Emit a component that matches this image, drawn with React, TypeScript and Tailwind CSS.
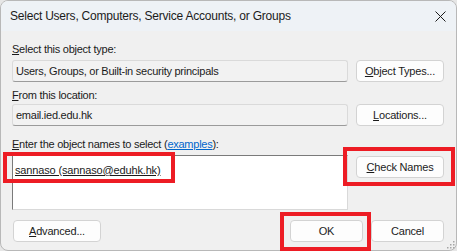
import React from 'react';

const Btn: React.FC<{ className?: string; children: React.ReactNode }> = ({ className = '', children }) => (
    <div className={`flex items-center justify-center h-[22px] bg-[#fdfdfd] border border-[#d3d3d3] rounded-[4px] text-[11px] tracking-[-0.2px] text-[#1b1b1b] shrink-0 ${className}`}>
        {children}
    </div>
);

const ReadField: React.FC<{ children: React.ReactNode }> = ({ children }) => (
    <div className="flex-1 h-[22px] flex items-center pl-[3px] bg-[#f2f2f2] border border-[#dadada] border-b-[#9b9b9b] rounded-[3px] text-[11px] tracking-[-0.25px] text-[#1b1b1b]">
        {children}
    </div>
);

export default function App() {
    return (
        <div className="relative w-[457px] h-[251px] bg-[#e6e6e6] font-['Liberation_Sans',Arial,sans-serif] overflow-hidden">
            <div className="w-[457px] h-[251px] flex flex-col bg-[#f0f0f0] border border-[#b8b8b8] rounded-[8px] overflow-hidden">
                {/* Title bar */}
                <div className="h-[30px] shrink-0 flex items-center pl-[9px] bg-[#eef2f6]">
                    <span className="text-[12px] tracking-[-0.22px] text-[#1b1b1b]">
                        Select Users, Computers, Service Accounts, or Groups
                    </span>
                    <svg className="ml-auto mr-[10px]" width="11" height="11" viewBox="0 0 11 11">
                        <path d="M0.5 0.5 L10.5 10.5 M10.5 0.5 L0.5 10.5" stroke="#1b1b1b" strokeWidth="1" fill="none" />
                    </svg>
                </div>

                {/* Body */}
                <div className="flex-1 flex flex-col pl-[11px] pr-[12px] pt-[10px]">
                    <div className="h-[16px] leading-[16px] text-[11px] tracking-[-0.25px] text-[#1b1b1b]">
                        <u>S</u>elect this object type:
                    </div>
                    <div className="mt-[3px] flex gap-[8px]">
                        <ReadField>Users, Groups, or Built-in security principals</ReadField>
                        <Btn className="w-[88px]"><u>O</u>bject Types...</Btn>
                    </div>

                    <div className="mt-[5px] h-[16px] leading-[16px] text-[11px] tracking-[-0.25px] text-[#1b1b1b]">
                        <u>F</u>rom this location:
                    </div>
                    <div className="mt-[1px] flex gap-[8px]">
                        <ReadField>email.ied.edu.hk</ReadField>
                        <Btn className="w-[88px]"><u>L</u>ocations...</Btn>
                    </div>

                    <div className="mt-[10px] h-[16px] leading-[16px] text-[11px] tracking-[-0.25px] text-[#1b1b1b]">
                        <u>E</u>nter the object names to select (<span className="text-[#0066cc] underline">examples</span>):
                    </div>
                    <div className="mt-[3px] flex gap-[8px] items-start">
                        <div className="flex-1 h-[55px] bg-white border border-[#7a7a7a] border-r-[#d9d9d9] border-b-[#d9d9d9] pl-[2px] pt-[6px]">
                            <div className="h-[16px] leading-[16px] text-[11px] tracking-[-0.15px] text-[#1b1b1b] underline">
                                sannaso (sannaso@eduhk.hk)
                            </div>
                        </div>
                        <Btn className="w-[88px] mt-[1px] h-[21px]"><u>C</u>heck Names</Btn>
                    </div>

                    <div className="mt-[10px] flex gap-[8px]">
                        <Btn className="ml-[1px] w-[88px]"><u>A</u>dvanced...</Btn>
                        <Btn className="ml-auto w-[73px]">OK</Btn>
                        <Btn className="w-[73px]">Cancel</Btn>
                    </div>
                </div>
            </div>

            {/* Annotation boxes */}
            <div className="absolute left-[3px] top-[152px] w-[172px] h-[31px] border-[4px] border-[#ed1c24]" />
            <div className="absolute left-[343px] top-[147px] w-[112px] h-[39px] border-[4px] border-[#ed1c24]" />
            <div className="absolute left-[280px] top-[212px] w-[91px] h-[39px] border-[4px] border-[#ed1c24]" />

            {/* Resize grip */}
            <svg className="absolute left-[446px] top-[240px]" width="9" height="9" viewBox="0 0 9 9">
                <rect x="7" y="1" width="1.5" height="1.5" fill="#a6a6a6" />
                <rect x="4" y="4" width="1.5" height="1.5" fill="#a6a6a6" />
                <rect x="7" y="4" width="1.5" height="1.5" fill="#a6a6a6" />
                <rect x="1" y="7" width="1.5" height="1.5" fill="#a6a6a6" />
                <rect x="4" y="7" width="1.5" height="1.5" fill="#a6a6a6" />
                <rect x="7" y="7" width="1.5" height="1.5" fill="#a6a6a6" />
            </svg>
        </div>
    );
}
